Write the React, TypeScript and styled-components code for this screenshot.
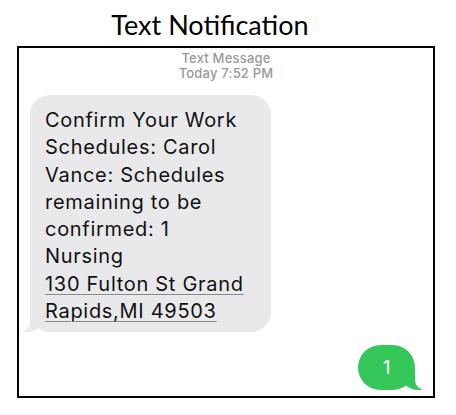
import styled, { createGlobalStyle } from "styled-components";

const GlobalStyle = createGlobalStyle`
    html, body {
        margin: 0;
        padding: 0;
        background: #ffffff;
    }
`;

const Page = styled.div`
    width: 456px;
    height: 415px;
    padding: 0 0 0 17px;
    box-sizing: border-box;
    display: flex;
    flex-direction: column;
`;

const Title = styled.h1`
    margin: 0;
    width: 386px;
    height: 46px;
    font-family: Lato, "Open Sans", sans-serif;
    font-weight: 400;
    font-size: 27px;
    line-height: 50px;
    color: #000;
    text-align: center;
`;

const PhoneFrame = styled.div`
    width: 418px;
    height: 352px;
    box-sizing: border-box;
    border: 2px solid #000;
    display: flex;
    flex-direction: column;
    font-family: Inter, "Liberation Sans", Arial, sans-serif;
`;

const ThreadHeader = styled.div`
    padding-top: 3px;
    text-align: center;
    font-size: 13px;
    line-height: 14.5px;
    font-weight: 500;
    letter-spacing: 0.2px;
    color: #98989d;
`;

const Bubble = styled.div<{ $outgoing?: boolean }>`
    position: relative;
    box-sizing: border-box;
    color: ${(props) => (props.$outgoing ? "#fff" : "#111")};
    background-color: ${(props) => (props.$outgoing ? "#35c759" : "#e9e9eb")};
    border-radius: ${(props) => (props.$outgoing ? "23px" : "20px")};

    &::before,
    &::after {
        content: "";
        position: absolute;
        bottom: 0;
        height: 20px;
    }
    &::before {
        width: 20px;
        background-color: ${(props) => (props.$outgoing ? "#35c759" : "#e9e9eb")};
        ${(props) =>
            props.$outgoing
                ? "right: -7px; border-bottom-left-radius: 16px 14px;"
                : "left: -7px; border-bottom-right-radius: 16px 14px;"}
    }
    &::after {
        width: 10px;
        background-color: #fff;
        ${(props) =>
            props.$outgoing
                ? "right: -10px; border-bottom-left-radius: 10px;"
                : "left: -10px; border-bottom-right-radius: 10px;"}
    }
`;

const Incoming = styled(Bubble)`
    margin: 15px 0 0 11px;
    width: 241px;
    padding: 12px 10px 7px 15px;
    font-size: 20px;
    line-height: 27.3px;
    letter-spacing: 0.7px;
    white-space: nowrap;
`;

const Outgoing = styled(Bubble)`
    margin: auto 18px 6px auto;
    width: 57px;
    height: 45px;
    display: flex;
    align-items: center;
    justify-content: center;
    font-size: 19px;
`;

const Address = styled.span`
    text-decoration: underline;
    text-decoration-color: #8a8a8e;
    text-decoration-thickness: 1px;
    text-underline-offset: 3px;
`;

export default function App() {
    return (
        <>
            <GlobalStyle />
            <Page>
                <Title>Text Notification</Title>
                <PhoneFrame>
                    <ThreadHeader>
                        Text Message
                        <br />
                        Today 7:52 PM
                    </ThreadHeader>
                    <Incoming>
                        Confirm Your Work
                        <br />
                        Schedules: Carol
                        <br />
                        Vance: Schedules
                        <br />
                        remaining to be
                        <br />
                        confirmed: 1
                        <br />
                        Nursing
                        <br />
                        <Address>130 Fulton St Grand</Address>
                        <br />
                        <Address>Rapids,MI 49503</Address>
                    </Incoming>
                    <Outgoing $outgoing>1</Outgoing>
                </PhoneFrame>
            </Page>
        </>
    );
}
